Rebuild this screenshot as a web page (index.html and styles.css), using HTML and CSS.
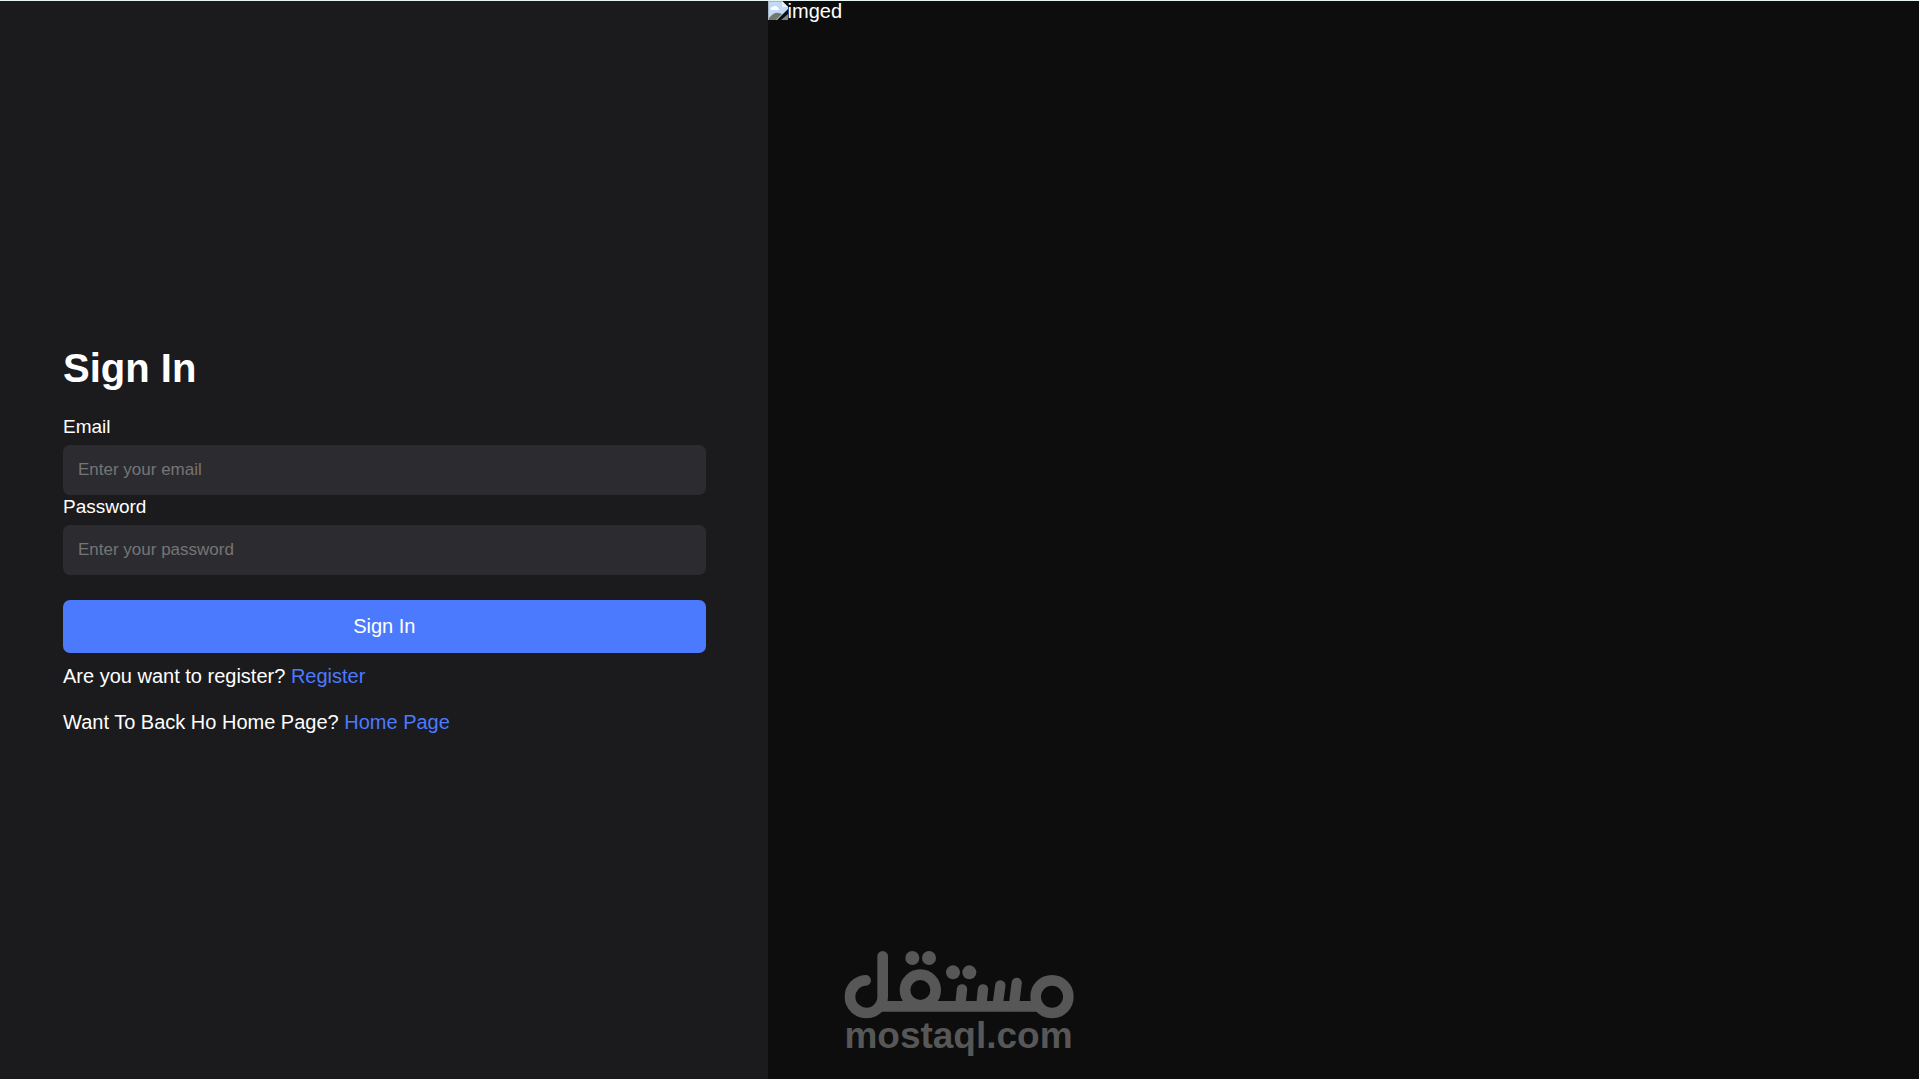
FILE: index.html
```html
<!DOCTYPE html>
<html lang="en">
<head>
  <meta charset="utf-8">
  <meta name="viewport" content="width=device-width, initial-scale=1">
  <title>Sign In</title>
  <link rel="stylesheet" href="styles.css">
</head>
<body>
  <div class="page">
    <main class="panel">
      <h1 class="title">Sign In</h1>
      <form class="form">
        <label class="label" for="email">Email</label>
        <input class="input" id="email" type="email" placeholder="Enter your email">
        <label class="label" for="password">Password</label>
        <input class="input" id="password" type="password" placeholder="Enter your password">
        <button class="submit" type="submit">Sign In</button>
      </form>
      <p class="note">Are you want to register? <a class="link" href="#register">Register</a></p>
      <p class="note">Want To Back Ho Home Page? <a class="link" href="#home">Home Page</a></p>
    </main>
    <aside class="cover">
      <svg class="cover-icon" viewBox="0 0 20 20" aria-hidden="true">
        <path d="M0 0H14L20 6V8L9 19H0Z" fill="#c3d9f8"/>
        <path d="M0 0H14V1H1V19H0Z" fill="#a9b4c4"/>
        <path d="M14 0L20 6H14Z" fill="#eef3fa"/>
        <path d="M3 9a2 2 0 0 1 2-3a3 3 0 0 1 5 1a2 2 0 0 1 1 2Z" fill="#fff"/>
        <path d="M1 19V17Q6 11 11 12L14 13L8 19Z" fill="#6f7a6c"/>
        <path d="M20 13V19H13Z" fill="#7d8678"/>
      </svg>
      <span>imged</span>
    </aside>
  </div>
  <div class="watermark">
    <svg class="watermark-logo" viewBox="42 33 690 204" role="img" aria-label="مستقل">
      <g fill="none" stroke="#575758" stroke-width="32" stroke-linecap="round">
        <path d="M107 121A49 49 0 1 0 158 170V49"/>
        <path d="M150 199H618"/>
        <circle cx="271" cy="150" r="46"/>
        <circle cx="666" cy="170" r="49"/>
        <path d="M396 148L391 195M459 148L454 195M511 136L503 195M560 129L552 195" stroke-width="31"/>
      </g>
      <g fill="#575758">
        <circle cx="247" cy="54" r="21"/>
        <circle cx="297" cy="54" r="21"/>
        <circle cx="369" cy="97" r="21"/>
        <circle cx="418" cy="97" r="21"/>
      </g>
    </svg>
    <span class="watermark-text">mostaql.com</span>
  </div>
</body>
</html>
```
FILE: styles.css
```css
* {
  box-sizing: border-box;
  margin: 0;
}

body {
  background: #0d0d0e;
  color: #fff;
  font-family: "Liberation Sans", Arial, sans-serif;
  font-size: 20px;
  line-height: 24px;
}

.page {
  display: flex;
  min-height: 100vh;
  border-top: 1px solid #e6f3f3;
}

.panel {
  display: flex;
  flex-direction: column;
  justify-content: center;
  width: 40%;
  padding: 0 62px 2px 63px;
  background: #1b1b1d;
}

.title {
  margin-bottom: 24px;
  font-size: 40px;
  line-height: 46px;
}

.form {
  display: flex;
  flex-direction: column;
  margin-bottom: 11px;
}

.label {
  margin-bottom: 6px;
  font-size: 19px;
  line-height: 24px;
}

.input {
  width: 100%;
  height: 50px;
  padding: 0 15px;
  border: 0;
  border-radius: 7px;
  background: #2c2c30;
  color: #fff;
  font-family: inherit;
  font-size: 17px;
}

.input::placeholder {
  color: #757575;
}

.submit {
  height: 53px;
  margin-top: 25px;
  border: 0;
  border-radius: 7px;
  background: #4c7aff;
  color: #fff;
  font-family: inherit;
  font-size: 20px;
  cursor: pointer;
}

.note + .note {
  margin-top: 22px;
}

.link {
  color: #4c7aff;
  text-decoration: none;
}

.cover {
  display: flex;
  flex: 1;
  align-items: flex-start;
  line-height: 20px;
}

.cover-icon {
  width: 20px;
  height: 20px;
}

.watermark {
  position: absolute;
  right: 0;
  bottom: 26px;
  left: 0;
  display: flex;
  flex-direction: column;
  align-items: center;
  padding-right: 2px;
}

.watermark-logo {
  width: 230px;
  height: 68px;
}

.watermark-text {
  color: #575758;
  font-size: 37px;
  font-weight: 700;
  line-height: 34px;
}
```
